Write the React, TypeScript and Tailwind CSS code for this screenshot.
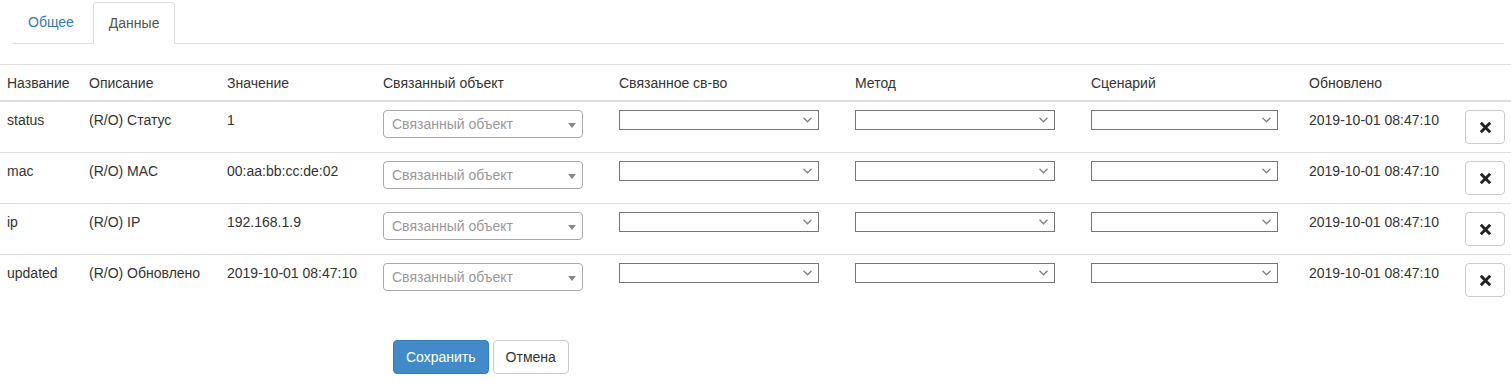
import React from "react";

const rows = [
  { name: "status", desc: "(R/O) Статус", value: "1" },
  { name: "mac", desc: "(R/O) MAC", value: "00:aa:bb:cc:de:02" },
  { name: "ip", desc: "(R/O) IP", value: "192.168.1.9" },
  { name: "updated", desc: "(R/O) Обновлено", value: "2019-10-01 08:47:10" },
];

const COLS =
  "grid grid-cols-[82px_138px_155px_236px_236px_236px_218px_156px_1fr]";

const HEADERS = [
  "Название",
  "Описание",
  "Значение",
  "Связанный объект",
  "Связанное св-во",
  "Метод",
  "Сценарий",
  "Обновлено",
  "",
];

function NativeSelect({ w }: { w: string }) {
  return (
    <div className={`relative h-[20px] ${w} border border-[#767676] bg-white`}>
      <svg
        className="absolute right-[6px] top-[6px]"
        width="9"
        height="6"
        viewBox="0 0 9 6"
      >
        <path d="M0.5 0.8 L4.5 4.8 L8.5 0.8" fill="none" stroke="#808080" strokeWidth="1.3" />
      </svg>
    </div>
  );
}

function Select2() {
  return (
    <div className="relative flex h-[28px] w-[200px] items-center rounded-[4px] border border-[#aaa] bg-white pl-[8px] text-[#999]">
      Связанный объект
      <span className="absolute right-[6px] top-[12px] h-0 w-0 border-x-[4px] border-t-[5px] border-x-transparent border-t-[#888]" />
    </div>
  );
}

function RemoveButton() {
  return (
    <button className="flex h-[34px] w-[40px] items-center justify-center rounded-[4px] border border-[#ccc] bg-white">
      <svg width="11" height="11" viewBox="0 0 12 12">
        <path d="M2 2 L10 10 M10 2 L2 10" stroke="#222" strokeWidth="3.2" strokeLinecap="square" />
      </svg>
    </button>
  );
}

export default function App() {
  return (
    <div className="min-h-[390px] bg-white pt-[2px] font-['Liberation_Sans',Arial,sans-serif] text-[14px] leading-[20px] text-[#333]">
      <div className="ml-[13px] mr-[7px] flex border-b border-[#ddd]">
        <a className="mr-[4px] -mb-px px-[15px] py-[10px] text-[#337ab7]">Общее</a>
        <a className="-mb-px rounded-t-[4px] border border-[#ddd] border-b-white bg-white px-[15px] py-[10px] text-[#555]">
          Данные
        </a>
      </div>

      <div className="mt-[20px] border-t border-[#ddd]">
        <div className={`${COLS} border-b-2 border-[#ddd]`}>
          {HEADERS.map((h, i) => (
            <div key={i} className={`pt-[8px] pb-[7px] ${i < 3 ? "pl-[7px]" : "pl-[8px]"}`}>
              {h}
            </div>
          ))}
        </div>
        {rows.map((r, idx) => (
          <div
            key={r.name}
            className={`${COLS} ${idx > 0 ? "border-t border-[#ddd]" : ""}`}
          >
            <div className="py-[8px] pl-[7px]">{r.name}</div>
            <div className="py-[8px] pl-[7px]">{r.desc}</div>
            <div className="py-[8px] pl-[7px]">{r.value}</div>
            <div className="py-[8px] pl-[8px]">
              <Select2 />
            </div>
            <div className="py-[8px] pl-[8px]">
              <NativeSelect w="w-[200px]" />
            </div>
            <div className="py-[8px] pl-[8px]">
              <NativeSelect w="w-[200px]" />
            </div>
            <div className="py-[8px] pl-[8px]">
              <NativeSelect w="w-[187px]" />
            </div>
            <div className="py-[8px] pl-[8px]">2019-10-01 08:47:10</div>
            <div className="py-[8px] pl-[8px]">
              <RemoveButton />
            </div>
          </div>
        ))}
      </div>

      <div className="mt-[35px] flex gap-[4px] pl-[393px]">
        <button className="h-[34px] rounded-[4px] border border-[#357ebd] bg-[#428bca] px-[12px] text-white">
          Сохранить
        </button>
        <button className="h-[34px] rounded-[4px] border border-[#ccc] bg-white px-[12px] text-[#333]">
          Отмена
        </button>
      </div>
    </div>
  );
}
